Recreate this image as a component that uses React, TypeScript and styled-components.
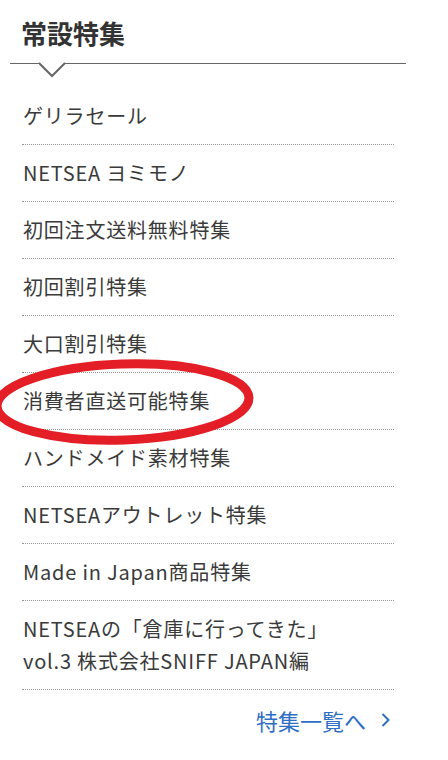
import React from "react";
import styled, { createGlobalStyle } from "styled-components";

const Global = createGlobalStyle`
  html, body { margin: 0; padding: 0; background: #fff; }
  body { font-family: "Noto Sans CJK JP", "Noto Sans", sans-serif; color: #333; }
`;

const Page = styled.div`
  position: relative;
  width: 448px;
  height: 760px;
  overflow: hidden;
  background: #fff;
`;

const Section = styled.section`
  width: 396px;
  margin-left: 10px;
`;

const Header = styled.div`
  position: relative;
  height: 64px;
  border-bottom: 1.5px solid #666;
  box-sizing: border-box;
`;

const Title = styled.h2`
  margin: 0;
  padding: 17px 0 0 11px;
  font-size: 26px;
  line-height: 32px;
  font-weight: 700;
  color: #333;
`;

const Notch = styled.svg`
  position: absolute;
  left: 29px;
  top: 62px;
`;

const List = styled.ul`
  list-style: none;
  margin: 24px 12px 0 12px;
  padding: 0;
`;

const Item = styled.li`
  position: relative;
  padding: 12px 0 12px 1px;
  font-size: 20px;
  letter-spacing: 0.8px;
  line-height: 32px;
  color: #3a3a3a;
  border-bottom: 1px dotted #999;
`;

const MoreRow = styled.div`
  display: flex;
  justify-content: flex-end;
  margin: 0 16px 0 12px;
  padding-top: 14px;
`;

const MoreLink = styled.a`
  display: flex;
  align-items: center;
  gap: 15px;
  font-size: 22px;
  line-height: 32px;
  color: #2f6ec5;
  text-decoration: none;
`;

const Circle = styled.svg`
  position: absolute;
  left: 0;
  top: 350px;
  pointer-events: none;
`;

const items: React.ReactNode[] = [
  "ゲリラセール",
  "NETSEA ヨミモノ",
  "初回注文送料無料特集",
  "初回割引特集",
  "大口割引特集",
  "消費者直送可能特集",
  "ハンドメイド素材特集",
  "NETSEAアウトレット特集",
  "Made in Japan商品特集",
  <>
    NETSEAの「倉庫に行ってきた」
    <br />
    vol.3 株式会社SNIFF JAPAN編
  </>,
];

export default function App() {
  return (
    <Page>
      <Global />
      <Section>
        <Header>
          <Title>常設特集</Title>
          <Notch width="28" height="18" viewBox="0 0 28 18">
            <path d="M0 1 L13 14 L26 1" fill="#fff" stroke="#666" strokeWidth="2" />
            <rect x="2" y="0" width="22" height="1.5" fill="#fff" />
          </Notch>
        </Header>
        <List>
          {items.map((t, i) => (
            <Item key={i}>{t}</Item>
          ))}
        </List>
        <MoreRow>
          <MoreLink href="#">
            <span>特集一覧へ</span>
            <svg width="9" height="16" viewBox="0 0 9 16">
              <path d="M1.5 2 L7.5 8 L1.5 14" fill="none" stroke="#2f6ec5" strokeWidth="2" />
            </svg>
          </MoreLink>
        </MoreRow>
      </Section>
      <Circle width="270" height="100" viewBox="0 0 270 100">
        <ellipse
          cx="123"
          cy="52"
          rx="126"
          ry="38"
          fill="none"
          stroke="#e31e26"
          strokeWidth="9"
          transform="rotate(-2 123 52)"
        />
      </Circle>
    </Page>
  );
}
